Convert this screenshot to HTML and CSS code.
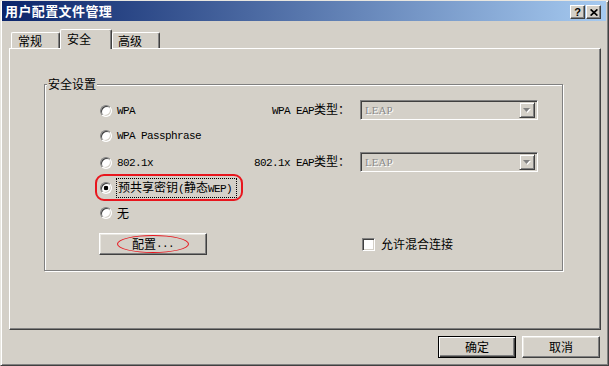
FILE: index.html
```html
<!DOCTYPE html>
<html lang="zh-CN">
<head>
<meta charset="utf-8">
<title>用户配置文件管理</title>
<link rel="stylesheet" href="styles.css">
</head>
<body>
<div class="window">
  <div class="titlebar">
    <span class="title">用户配置文件管理</span>
    <div class="tb-buttons">
      <span class="tb-btn q">?</span>
      <span class="tb-btn"><svg width="8" height="7" viewBox="0 0 8 7"><path d="M0.6 0.4 L7.4 6.6 M7.4 0.4 L0.6 6.6" stroke="#000" stroke-width="1.7" fill="none"/></svg></span>
    </div>
  </div>

  <div class="tabs">
    <div class="tab">常规</div>
    <div class="tab active">安全</div>
    <div class="tab last">高级</div>
  </div>

  <div class="panel">
    <div class="group">
      <div class="group-title">安全设置</div>
      <div class="grid">
        <div class="opt r1"><span class="radio"></span><span class="en">WPA</span></div>
        <div class="lbl r1"><span class="en">WPA EAP</span>类型：</div>
        <div class="combo r1"><span class="val">LEAP</span><span class="drop"><svg width="8" height="6" viewBox="0 0 8 6"><path d="M1 1h7l-3.5 4z" fill="#fff"/><path d="M0 0h7l-3.5 4z" fill="#808080"/></svg></span></div>

        <div class="opt r2"><span class="radio"></span><span class="en">WPA Passphrase</span></div>

        <div class="opt r3"><span class="radio"></span><span class="en">802.1x</span></div>
        <div class="lbl r3"><span class="en">802.1x EAP</span>类型：</div>
        <div class="combo r3"><span class="val">LEAP</span><span class="drop"><svg width="8" height="6" viewBox="0 0 8 6"><path d="M1 1h7l-3.5 4z" fill="#fff"/><path d="M0 0h7l-3.5 4z" fill="#808080"/></svg></span></div>

        <div class="r4 cell-a">
          <div class="hl">
            <div class="opt sel"><span class="radio checked"></span><span class="focus">预共享密钥<span class="en">(</span>静态<span class="en">WEP)</span></span></div>
          </div>
        </div>

        <div class="opt r5"><span class="radio"></span><span>无</span></div>

        <div class="r6 cell-a">
          <button class="btn config">配置<span class="en">...</span><span class="ellipse"></span></button>
        </div>
        <div class="checkopt r6"><span class="check"></span><span>允许混合连接</span></div>
      </div>
    </div>
  </div>

  <div class="footer">
    <button class="btn default">确定</button>
    <button class="btn">取消</button>
  </div>
</div>
</body>
</html>
```

FILE: styles.css
```css
html, body {
  margin: 0;
  padding: 0;
}

body {
  background: #d4d0c8;
  font: 12px/14px "Noto Sans CJK SC", "Noto Sans CJK TC", sans-serif;
  color: #000;
}

.en {
  font-family: "Liberation Mono", "DejaVu Sans Mono", monospace;
  font-size: 11px;
  letter-spacing: -0.6px;
}

.window {
  box-sizing: border-box;
  width: 609px;
  height: 366px;
  border: 1px solid;
  border-color: #e8e6e0 #404040 #404040 #e8e6e0;
  box-shadow: inset 1px 1px #fff, inset -1px -1px #808080;
  padding: 0 2px 0 1px;
  display: flex;
  flex-direction: column;
  background: #d4d0c8;
}

.titlebar {
  height: 20px;
  display: flex;
  align-items: center;
  justify-content: space-between;
  background: linear-gradient(to right, #0a246a, #a6caf0);
  padding: 0 5px 0 3px;
  flex-shrink: 0;
}

.title {
  color: #fff;
  font-weight: 700;
  font-size: 13px;
  letter-spacing: 0.4px;
  line-height: 16px;
}

.tb-buttons {
  display: flex;
  gap: 1px;
  margin-top: 2px;
}

.tb-btn {
  box-sizing: border-box;
  width: 15px;
  height: 14px;
  background: #d4d0c8;
  border: 1px solid;
  border-color: #fff #404040 #404040 #fff;
  box-shadow: inset -1px -1px #808080;
  display: flex;
  align-items: center;
  justify-content: center;
}

.tb-btn.q {
  font: 700 11px/12px "Liberation Sans", sans-serif;
}

.tabs {
  display: flex;
  align-items: flex-end;
  height: 19px;
  margin: 8px 5px 0 7px;
  padding-left: 2px;
  flex-shrink: 0;
}

.tab {
  box-sizing: border-box;
  height: 16px;
  width: 49px;
  border: 1px solid;
  border-bottom: 0;
  border-color: #fff #404040 #404040 #fff;
  box-shadow: inset -1px 0 #808080;
  border-radius: 2px 2px 0 0;
  padding-left: 6px;
  line-height: 15px;
}

.tab.active {
  width: 52px;
  height: 20px;
  margin-bottom: -1px;
  padding-top: 1px;
  background: #d4d0c8;
  position: relative;
  z-index: 1;
}

.tab.last {
  width: 48px;
  padding-left: 5px;
}

.panel {
  box-sizing: border-box;
  height: 282px;
  margin: 0 5px 0 7px;
  border: 1px solid;
  border-color: #fff #404040 #404040 #fff;
  box-shadow: inset -1px -1px #808080;
  padding: 35px 0 0 34px;
  flex-shrink: 0;
}

.group {
  box-sizing: border-box;
  width: 519px;
  height: 187px;
  border: 1px solid #808080;
  box-shadow: inset 1px 1px #fff, 1px 1px #fff;
}

.group-title {
  width: max-content;
  height: 14px;
  margin: -8px 0 0 2px;
  padding: 0 1px;
  background: #d4d0c8;
  line-height: 14px;
}

.grid {
  display: grid;
  margin-top: 9px;
  padding-left: 55px;
  grid-template-columns: 150px 110px 178px;
  grid-template-rows: 20px 30px 24px 27px 22px 42px;
  align-items: center;
}

.r1 { grid-row: 1; }
.r2 { grid-row: 2; }
.r3 { grid-row: 3; }
.r4 { grid-row: 4; }
.r5 { grid-row: 5; }
.r6 { grid-row: 6; }

.opt, .cell-a { grid-column: 1; }
.lbl { grid-column: 2; }
.combo, .checkopt { grid-column: 3; }

.opt {
  display: flex;
  align-items: center;
  gap: 5px;
  white-space: nowrap;
  padding-top: 1px;
}

.radio {
  box-sizing: border-box;
  width: 12px;
  height: 12px;
  flex-shrink: 0;
  border-radius: 50%;
  background: #fff;
  border: 1px solid;
  border-color: #808080 #fff #fff #808080;
  box-shadow: inset 1px 1px #404040, inset -1px -1px #d4d0c8;
}

.radio.checked {
  background: radial-gradient(circle, #000 0 2px, #fff 2.6px);
}

.hl {
  box-sizing: border-box;
  width: max-content;
  height: 27px;
  margin-left: -5px;
  padding: 0 4px 0 3px;
  border: 2px solid #e8161e;
  border-radius: 9px;
  display: flex;
  align-items: center;
}

.opt.sel {
  gap: 4px;
  padding-top: 0;
}

.focus {
  border: 1px dotted #000;
  padding: 1px 4px 1px 1px;
  line-height: 14px;
}

.lbl {
  text-align: right;
  padding-right: 10px;
  white-space: nowrap;
}

.combo {
  box-sizing: border-box;
  width: 178px;
  height: 20px;
  border: 1px solid;
  border-color: #808080 #fff #fff #808080;
  box-shadow: inset 1px 1px #404040, inset -1px -1px #d4d0c8;
  padding: 2px 2px 2px 4px;
  display: flex;
  align-items: center;
  justify-content: space-between;
}

.combo .val {
  color: #8a8a8a;
  text-shadow: 1px 1px #fff;
  font-family: "Liberation Serif", serif;
  font-size: 11px;
}

.drop {
  box-sizing: border-box;
  width: 16px;
  height: 16px;
  border: 1px solid;
  border-color: #d4d0c8 #404040 #404040 #d4d0c8;
  box-shadow: inset 1px 1px #fff, inset -1px -1px #808080;
  display: flex;
  align-items: center;
  justify-content: center;
  padding-top: 1px;
}

.btn {
  box-sizing: border-box;
  background: #d4d0c8;
  border: 1px solid;
  border-color: #fff #404040 #404040 #fff;
  box-shadow: inset -1px -1px #808080, inset 1px 1px #e8e6e0;
  font: inherit;
  color: #000;
  padding: 0;
  margin: 0;
  width: 78px;
  height: 22px;
  display: flex;
  align-items: center;
  justify-content: center;
}

.btn.config {
  width: 108px;
  margin-left: -1px;
  position: relative;
}

.ellipse {
  position: absolute;
  left: 17px;
  top: 1px;
  width: 72px;
  height: 18px;
  box-sizing: border-box;
  border: 1.5px solid #e8161e;
  border-radius: 50%;
}

.checkopt {
  display: flex;
  align-items: center;
  gap: 6px;
}

.check {
  box-sizing: border-box;
  width: 13px;
  height: 13px;
  margin-left: 2px;
  background: #fff;
  border: 1px solid;
  border-color: #808080 #fff #fff #808080;
  box-shadow: inset 1px 1px #404040, inset -1px -1px #d4d0c8;
}

.footer {
  display: flex;
  justify-content: flex-end;
  gap: 6px;
  margin: 6px 6px 0 0;
}

.btn.default {
  border: 1px solid #000;
  box-shadow: inset 1px 1px #fff, inset -1px -1px #404040, inset -2px -2px #808080;
}
```
